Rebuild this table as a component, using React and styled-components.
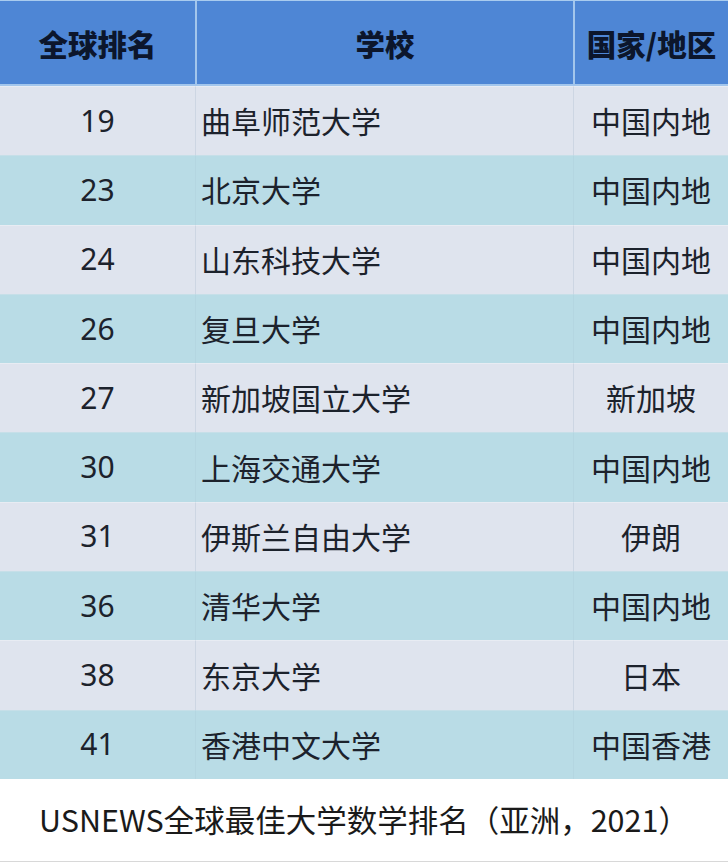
import styled, { createGlobalStyle } from "styled-components";

const Global = createGlobalStyle`
  html, body {
    margin: 0;
    padding: 0;
    background: #ffffff;
  }
  body {
    font-family: "Noto Sans", "Noto Sans CJK SC", sans-serif;
  }
`;

const rows = [
  ["19", "曲阜师范大学", "中国内地"],
  ["23", "北京大学", "中国内地"],
  ["24", "山东科技大学", "中国内地"],
  ["26", "复旦大学", "中国内地"],
  ["27", "新加坡国立大学", "新加坡"],
  ["30", "上海交通大学", "中国内地"],
  ["31", "伊斯兰自由大学", "伊朗"],
  ["36", "清华大学", "中国内地"],
  ["38", "东京大学", "日本"],
  ["41", "香港中文大学", "中国香港"],
];

const Page = styled.div`
  width: 728px;
  height: 862px;
  display: flex;
  flex-direction: column;
  background: #ffffff;
  overflow: hidden;
`;

const Table = styled.div`
  display: grid;
  grid-template-columns: 195px 378px 155px;
  border-top: 1px solid #a9ccef;
`;

const Head = styled.div`
  height: 83px;
  display: flex;
  align-items: center;
  justify-content: center;
  background: #4e86d5;
  color: #0c162c;
  font-family: "Noto Sans CJK SC", sans-serif;
  font-weight: 900;
  font-size: 29.5px;
  border-left: ${(p) => (p.$first ? "none" : "2px solid #a3c6ec")};
  border-bottom: 2px solid #a3c6ec;
`;

const Cell = styled.div`
  height: 69.3px;
  box-sizing: border-box;
  display: flex;
  align-items: center;
  justify-content: ${(p) => (p.$left ? "flex-start" : "center")};
  padding-left: ${(p) => (p.$left ? "5px" : "0")};
  padding-bottom: 2px;
  background: ${(p) => (p.$alt ? "#b9dce6" : "#dfe4ee")};
  color: #1c222c;
  font-family: "Noto Sans", "Noto Sans CJK SC", sans-serif;
  font-size: 30px;
  border-left: ${(p) =>
    p.$first ? "none" : p.$alt ? "1px solid #b4d6e1" : "1px solid #cdd6e3"};
  border-top: 1px solid ${(p) => (p.$alt ? "#c6dfe8" : "#e8ecf3")};
`;

const Caption = styled.div`
  flex: 1;
  display: flex;
  align-items: center;
  justify-content: center;
  padding-bottom: 2px;
  color: #1a1a1a;
  font-family: "Noto Sans CJK SC", sans-serif;
  font-size: 30.5px;
  border-bottom: 1px solid #d8d8d8;
  box-sizing: border-box;
`;

export default function App() {
  return (
    <Page>
      <Global />
      <Table>
        <Head $first>全球排名</Head>
        <Head>学校</Head>
        <Head>国家/地区</Head>
        {rows.map(([rank, school, region], i) => {
          const alt = i % 2 === 1;
          return [
            <Cell key={rank + "a"} $alt={alt} $first>
              {rank}
            </Cell>,
            <Cell key={rank + "b"} $alt={alt} $left>
              {school}
            </Cell>,
            <Cell key={rank + "c"} $alt={alt}>
              {region}
            </Cell>,
          ];
        })}
      </Table>
      <Caption>USNEWS全球最佳大学数学排名（亚洲，2021）</Caption>
    </Page>
  );
}
